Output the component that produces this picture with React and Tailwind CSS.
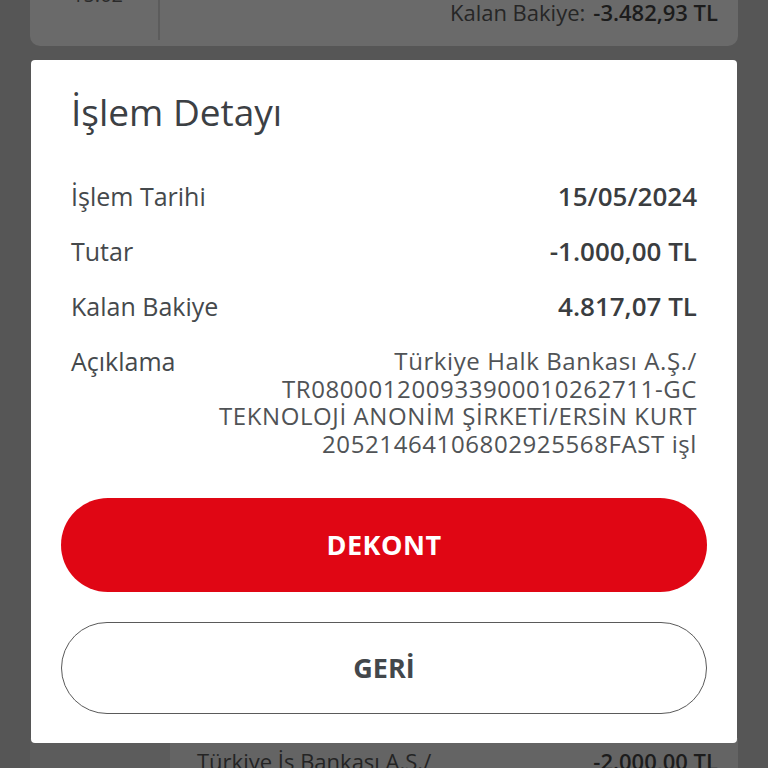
const rows = [
  { label: 'İşlem Tarihi', value: '15/05/2024' },
  { label: 'Tutar', value: '-1.000,00 TL' },
  { label: 'Kalan Bakiye', value: '4.817,07 TL' },
]

const description = [
  'Türkiye Halk Bankası A.Ş./',
  'TR080001200933900010262711-GC',
  'TEKNOLOJİ ANONİM ŞİRKETİ/ERSİN KURT',
  '20521464106802925568FAST işl',
]

export default function App() {
  return (
    <div
      className="relative w-[768px] h-[768px] overflow-hidden bg-[#565656]"
      style={{ fontFamily: '"Open Sans", "Noto Sans", sans-serif' }}
    >
      {/* page behind the overlay */}
      <div className="flex flex-col h-full">
        <div className="mx-[30px] h-[46px] rounded-b-[10px] bg-[#6a6a6a] flex">
          <div className="w-[130px] border-r-2 border-[#5c5c5c] h-[40px] relative overflow-hidden">
            <span className="absolute -top-[20px] left-[42px] text-[20px] text-[#2a2a2a]">15:02</span>
          </div>
          <div className="flex-1 flex justify-end items-start pr-[20px] text-[22px] leading-[24px] text-[#262626]">
            <span>Kalan Bakiye:</span>
            <span className="ml-[8px] font-semibold text-[#1c1c1c]">-3.482,93 TL</span>
          </div>
        </div>
        <div className="flex-1" />
        <div className="mx-[30px] h-[30px] flex">
          <div className="w-[140px] bg-[#5c5c5c]" />
          <div className="flex-1 bg-[#646464] flex justify-between items-start pl-[27px] pr-[20px] text-[22px] leading-[30px] text-[#242424]">
            <span className="pt-[8px]">Türkiye İş Bankası A.Ş./</span>
            <span className="pt-[8px] font-semibold text-[#1c1c1c]">-2.000,00 TL</span>
          </div>
        </div>
      </div>

      {/* modal */}
      <div className="absolute left-[31px] top-[60px] w-[706px] h-[683px] bg-white rounded-[4px] flex flex-col pt-[28px] pb-[29px]">
        <h1 className="px-[40px] text-[37px] leading-[48px] font-medium text-[#3c4044]">İşlem Detayı</h1>

        <div className="mt-[46px] px-[40px] flex flex-col gap-[27px]">
          {rows.map((r) => (
            <div key={r.label} className="flex justify-between items-start text-[25px] leading-[28px]">
              <span className="text-[#45494c]">{r.label}</span>
              <span className="text-[26px] font-semibold text-[#3a3d40]">{r.value}</span>
            </div>
          ))}
          <div className="flex justify-between items-start text-[25px] leading-[28px]">
            <span className="text-[#45494c]">Açıklama</span>
            <div className="flex flex-col items-end text-[24px] leading-[27.5px] tracking-[0.6px] text-[#505356]">
              {description.map((d) => (
                <span key={d}>{d}</span>
              ))}
            </div>
          </div>
        </div>

        <div className="flex-1" />

        <div className="px-[30px] flex flex-col gap-[30px]">
          <button className="h-[94px] rounded-full bg-[#e00614] text-white text-[27px] font-bold tracking-[0.5px]">
            DEKONT
          </button>
          <button className="h-[92px] rounded-full border-[1.5px] border-[#5a5a5a] text-[#43474b] text-[27px] font-bold">
            GERİ
          </button>
        </div>
      </div>
    </div>
  )
}
